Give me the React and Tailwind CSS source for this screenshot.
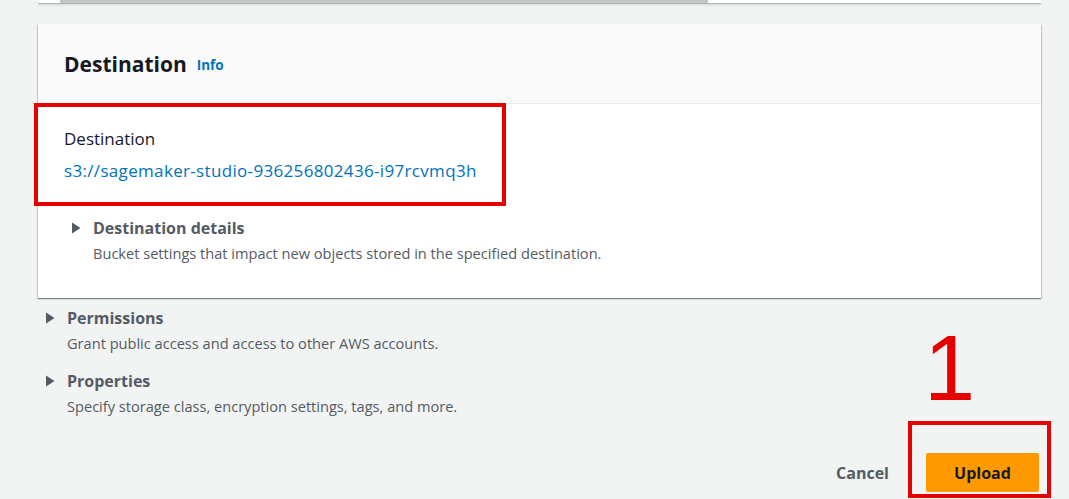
import React from 'react';

const Caret = ({ className }) => (
    <svg className={className} width="10" height="12" viewBox="0 0 10 12">
        <path d="M1 0.5 L9.5 6 L1 11.5 Z" fill="#545b64" />
    </svg>
);

const Section = ({ title, text, className }) => (
    <div className={className}>
        <div className="flex items-center">
            <Caret className="mr-[12px]" />
            <span className="text-[16px] font-bold text-[#545b64] leading-[22px]">{title}</span>
        </div>
        <p className="pl-[22px] mt-[4px] text-[14.6px] text-[#545b64] leading-[20px]">{text}</p>
    </div>
);

export default function App() {
    return (
        <div className="relative h-[499px] overflow-hidden bg-[#f2f3f3] font-['Open_Sans',sans-serif]">
            <div className="ml-[38px] mr-[28px]">
                <div className="h-[4px] bg-white border-b border-[#aab7b8] shadow-sm pl-[22px]">
                    <div className="w-[648px] h-[3px] bg-[#c6c6c6]" />
                </div>

                <div className="mt-[20px] bg-white shadow-[0_1px_1px_0_rgba(0,28,36,0.3),1px_1px_1px_0_rgba(0,28,36,0.15),-1px_1px_1px_0_rgba(0,28,36,0.15)]">
                    <div className="h-[80px] flex items-center pl-[26px] bg-[#fafafa] border-b border-[#eaeded]">
                        <h2 className="text-[21px] font-bold text-[#16191f] leading-[28px]">Destination</h2>
                        <a className="ml-[10px] mt-[4px] text-[13.5px] font-bold text-[#0073bb]">Info</a>
                    </div>
                    <div className="pl-[26px] pt-[23px] pb-[35px]">
                        <p className="text-[17px] text-[#16191f] leading-[24px]">Destination</p>
                        <a className="block mt-[8px] text-[17px] tracking-[0.33px] text-[#0073bb] leading-[24px]">s3://sagemaker-studio-936256802436-i97rcvmq3h</a>
                        <Section
                            className="mt-[34px] pl-[7px]"
                            title="Destination details"
                            text="Bucket settings that impact new objects stored in the specified destination."
                        />
                    </div>
                </div>

                <Section
                    className="mt-[9px] pl-[7px]"
                    title="Permissions"
                    text="Grant public access and access to other AWS accounts."
                />
                <Section
                    className="mt-[17px] pl-[7px]"
                    title="Properties"
                    text="Specify storage class, encryption settings, tags, and more."
                />

                <div className="flex justify-end items-center mt-[37px] mr-[2px]">
                    <button className="text-[16px] font-bold text-[#545b64] mr-[37px]">Cancel</button>
                    <button className="w-[113px] h-[39px] rounded-[2px] bg-[#ff9900] text-[16px] font-bold text-[#16191f]">Upload</button>
                </div>
            </div>

            <div className="absolute left-[34px] top-[103px] w-[472px] h-[103px] border-[4px] border-[#e60000]" />
            <div className="absolute left-[908px] top-[421px] w-[143px] h-[77px] border-[4px] border-[#e60000]" />
            <div className="absolute left-[924px] top-[318px] text-[92px] leading-[100px] text-[#e60000] font-['Liberation_Sans',sans-serif]">1</div>
        </div>
    );
}
